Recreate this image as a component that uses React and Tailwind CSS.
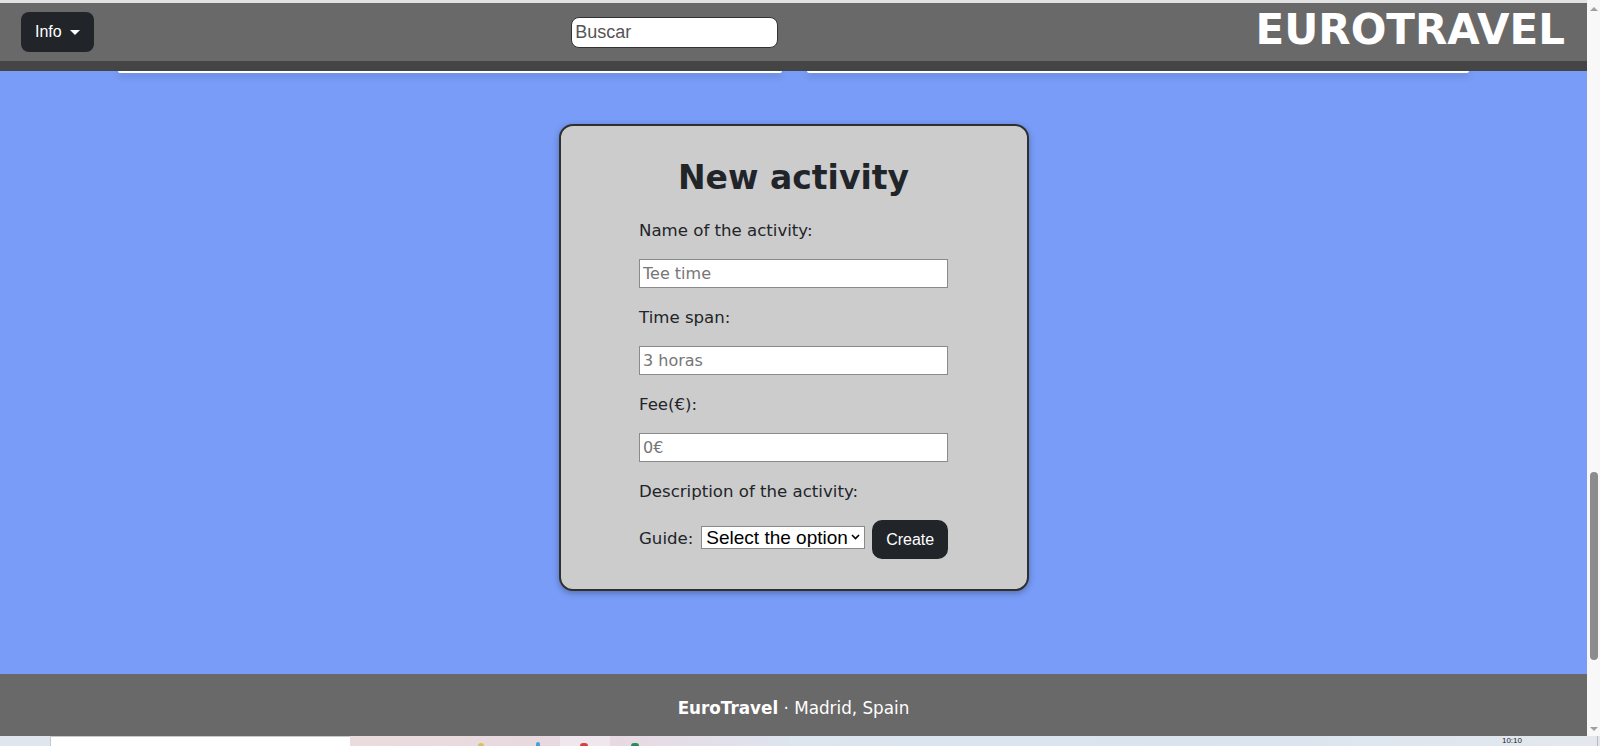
import React from 'react'

const sans = { fontFamily: '"DejaVu Sans", Verdana, sans-serif' }

export default function App() {
  return (
    <div className="w-[1600px] h-[746px] overflow-hidden flex flex-col">
      <div className="flex h-[736px]">
        <div className="w-[1587px] flex flex-col bg-[#789cf7]">
          <div className="h-[3px] bg-[#e2e2e2]" />
          <Header />
          <div className="h-[10px] bg-[#454545]" />
          {/* bottoms of the cards scrolled under the navbar */}
          <div className="flex justify-center gap-[25px]">
            <div className="w-[664px] h-[2px] bg-white rounded-b-md shadow-[0_3px_6px_rgba(0,0,0,0.25)]" />
            <div className="w-[662px] h-[2px] bg-white rounded-b-md shadow-[0_3px_6px_rgba(0,0,0,0.25)]" />
          </div>
          <main className="flex-1 flex justify-center items-start pt-[51px]">
            <ActivityForm />
          </main>
          <Footer />
        </div>
        <Scrollbar />
      </div>
      <Taskbar />
    </div>
  )
}

function Header() {
  return (
    <header className="h-[58px] bg-[#696969] flex items-center justify-between pl-[21px] pr-[22px]">
      <button className="h-[40px] w-[73px] rounded-lg bg-[#212529] text-white flex items-center pl-[14px] text-base font-['Liberation_Sans',Arial,sans-serif]">
        <span>Info</span>
        <span className="ml-[8px] w-0 h-0 border-x-[5px] border-x-transparent border-t-[5px] border-t-white" />
      </button>
      <input
        className="w-[207px] h-[31px] rounded-lg border border-[#333] bg-white px-[3px] text-[18px] placeholder:text-[#555] font-['Liberation_Sans',Arial,sans-serif] outline-none"
        placeholder="Buscar"
      />
      <h1 className="text-white font-bold text-[42px] leading-none mt-[-4px]" style={sans}>EUROTRAVEL</h1>
    </header>
  )
}

function Field({ label, placeholder, first }) {
  return (
    <div className={first ? '' : 'mt-[18px]'}>
      <label className="block leading-6">{label}</label>
      <input
        className="mt-4 block w-[309px] h-[29px] bg-white border border-[#8a8a8a] px-[3px] text-base placeholder:text-[#767676] outline-none"
        style={sans}
        placeholder={placeholder}
      />
    </div>
  )
}

function ActivityForm() {
  return (
    <div
      className="w-[470px] bg-[#cccccc] border-2 border-[#2f2f2f] rounded-[14px] shadow-[0_2px_6px_rgba(0,0,0,0.3)] pt-[32px] pb-[30px] text-[#212529] text-[16.6px]"
      style={sans}
    >
      <h2 className="text-center font-bold text-[33px] leading-[40px] mb-[21px]">New activity</h2>
      <form className="w-[309px] mx-auto" onSubmit={e => e.preventDefault()}>
        <Field first label="Name of the activity:" placeholder="Tee time" />
        <Field label="Time span:" placeholder="3 horas" />
        <Field label="Fee(€):" placeholder="0€" />
        <div className="mt-[18px] leading-6">Description of the activity:</div>
        <div className="mt-[14px] flex items-center">
          <label className="leading-6">Guide:</label>
          <div className="relative ml-[8px]">
            <select className="appearance-none w-[164px] h-[23px] bg-white border border-[#8a8a8a] pl-[4px] text-[19px] leading-none text-black font-['Liberation_Sans',Arial,sans-serif] outline-none">
              <option>Select the option</option>
            </select>
            <svg className="absolute right-[5px] top-[8px] pointer-events-none" width="9" height="6" viewBox="0 0 9 6">
              <path d="M1 1l3.5 3.5L8 1" fill="none" stroke="#000" strokeWidth="1.6" />
            </svg>
          </div>
          <button className="ml-[7px] w-[76px] h-[39px] rounded-[10px] bg-[#212529] text-white text-base font-['Liberation_Sans',Arial,sans-serif] mt-[2px]">
            Create
          </button>
        </div>
      </form>
    </div>
  )
}

function Footer() {
  return (
    <footer className="h-[62px] bg-[#696969] flex items-center justify-center pt-[8px] text-white text-[16.8px]" style={sans}>
      <span><b>EuroTravel</b> · Madrid, Spain</span>
    </footer>
  )
}

function Scrollbar() {
  return (
    <div className="w-[13px] bg-[#f8f8f8] flex flex-col items-center">
      <div className="mt-[7px] w-0 h-0 border-x-[4px] border-x-transparent border-b-[4px] border-b-[#a0a0a0]" />
      <div className="flex-1" />
      <div className="w-[8px] h-[188px] rounded-full bg-[#8c8c8c] mb-[67px]" />
      <div className="mb-[5px] w-0 h-0 border-x-[4px] border-x-transparent border-t-[4px] border-t-[#a0a0a0]" />
    </div>
  )
}

function Taskbar() {
  return (
    <div className="h-[10px] flex bg-[#dfe6ee]">
      <div className="w-[50px]" />
      <div className="w-[300px] bg-white border-t border-l border-[#c8c8c8]" />
      <div className="w-[210px] bg-gradient-to-r from-[#eadcdc] to-[#e8d9e0] flex items-end">
        <span className="ml-[128px] w-[6px] h-[3px] rounded-t-full bg-[#d8c060]" />
        <span className="ml-[52px] w-[4px] h-[4px] rounded-t-full bg-[#4aa0d8]" />
      </div>
      <div className="w-[50px] bg-[#efe6ee] flex items-end">
        <span className="ml-[20px] w-[8px] h-[3px] rounded-t-full bg-[#d84040]" />
      </div>
      <div className="w-[180px] bg-gradient-to-r from-[#e8d9e2] to-[#dde4ee] flex items-end">
        <span className="ml-[21px] w-[8px] h-[3px] rounded-t-full bg-[#2f8a5a]" />
      </div>
      <div className="flex-1 bg-gradient-to-r from-[#dde6ef] via-[#d9e4ef] to-[#e4e8ee] flex justify-end items-start pr-[75px]">
        <span className="text-[8px] leading-[8px] text-[#222] font-['Liberation_Sans',Arial,sans-serif] mt-[1px]">10:10</span>
      </div>
      <div className="w-[3px] border-l border-[#bbb]" />
    </div>
  )
}
